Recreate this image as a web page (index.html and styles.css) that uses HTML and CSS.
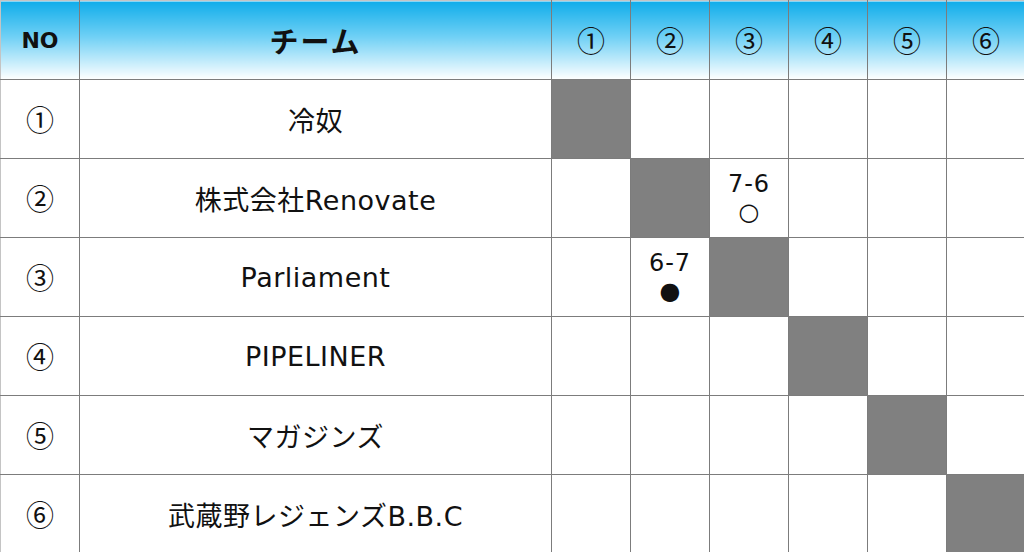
FILE: index.html
```html
<!DOCTYPE html>
<html lang="ja">
<head>
<meta charset="utf-8">
<link rel="stylesheet" href="styles.css">
</head>
<body>
<table class="league">
  <colgroup>
    <col class="c-no"><col class="c-team">
    <col class="c-m"><col class="c-m"><col class="c-m"><col class="c-m"><col class="c-m"><col class="c-m">
  </colgroup>
  <thead>
    <tr>
      <th class="h-no">NO</th>
      <th class="h-team">チーム</th>
      <th>①</th><th>②</th><th>③</th><th>④</th><th>⑤</th><th>⑥</th>
    </tr>
  </thead>
  <tbody>
    <tr>
      <td class="no">①</td><td class="team">冷奴</td>
      <td class="self"></td><td></td><td></td><td></td><td></td><td></td>
    </tr>
    <tr>
      <td class="no">②</td><td class="team">株式会社Renovate</td>
      <td></td><td class="self"></td>
      <td class="score"><span class="pts">7-6</span><span class="mark">○</span></td>
      <td></td><td></td><td></td>
    </tr>
    <tr>
      <td class="no">③</td><td class="team">Parliament</td>
      <td></td>
      <td class="score"><span class="pts">6-7</span><span class="mark">●</span></td>
      <td class="self"></td><td></td><td></td><td></td>
    </tr>
    <tr>
      <td class="no">④</td><td class="team">PIPELINER</td>
      <td></td><td></td><td></td><td class="self"></td><td></td><td></td>
    </tr>
    <tr>
      <td class="no">⑤</td><td class="team">マガジンズ</td>
      <td></td><td></td><td></td><td></td><td class="self"></td><td></td>
    </tr>
    <tr>
      <td class="no">⑥</td><td class="team">武蔵野レジェンズB.B.C</td>
      <td></td><td></td><td></td><td></td><td></td><td class="self"></td>
    </tr>
  </tbody>
</table>
</body>
</html>
```
FILE: styles.css
```css
html, body {
  margin: 0;
  padding: 0;
  background: #ffffff;
}
body {
  font-family: "DejaVu Sans", "Noto Sans CJK JP", sans-serif;
  color: #111;
}
.league {
  width: 1024px;
  height: 552px;
  border-collapse: collapse;
  table-layout: fixed;
  border-top: 1px solid #c4c4c4;
  border-left: 1px solid #c4c4c4;
  border-right: 1px solid #c4c4c4;
  border-bottom: 1px solid #808080;
}
.c-no { width: 79px; }
.c-team { width: 472px; }
.c-m { width: 79px; }
.league th,
.league td {
  border: 1px solid #7c7c7c;
  padding: 0;
  text-align: center;
  vertical-align: middle;
  height: 78px;
}
.league tr:first-child th { border-top-color: #c4c4c4; }
.league th:first-child,
.league td:first-child { border-left-color: #c4c4c4; }
.league th:last-child,
.league td:last-child { border-right-color: #c4c4c4; }
.league tbody tr:last-child td { border-bottom-color: #808080; }
.league thead th {
  background: linear-gradient(to bottom, #10adea 0%, #6fd0f5 45%, #ffffff 100%);
  font-weight: normal;
  font-size: 28px;
  font-family: "Noto Sans CJK JP", sans-serif;
  color: #111;
}
.league thead th.h-no {
  font-family: "DejaVu Sans", sans-serif;
  font-weight: bold;
  font-size: 22px;
}
.league thead th.h-team {
  font-weight: bold;
  font-size: 29px;
  letter-spacing: 2px;
}
.no {
  font-family: "Noto Sans CJK JP", sans-serif;
  font-size: 28px;
}
.team {
  font-size: 27px;
  letter-spacing: 0.5px;
}
.self { background: #808080; }
.score {
  font-size: 24px;
  line-height: 28px;
}
.score .pts,
.score .mark {
  display: block;
}
.score .pts { letter-spacing: 1px; }
.score .mark {
  font-family: "DejaVu Sans", sans-serif;
  font-size: 24px;
  line-height: 28px;
}
```
